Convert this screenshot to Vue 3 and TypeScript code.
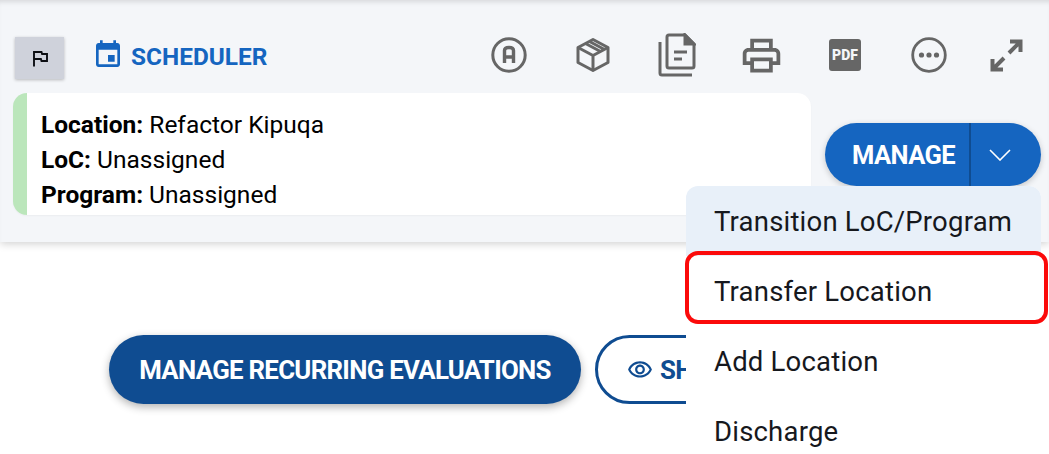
<template>
  <div class="page">
    <header class="panel">
      <div class="toolbar">
        <button class="flag-btn" aria-label="Flag">
          <svg width="16" height="17" viewBox="0 0 16 17" fill="none" stroke="#0c0e12" stroke-width="1.900">
            <path d="M2 16.500V2h7.500l.6 2H15v7H9.500l-.6-2H2" />
          </svg>
        </button>
        <div class="title">
          <svg class="title-icon" width="32" height="32" viewBox="0 0 24 24" fill="#1565c0">
            <path d="M17 12h-5v5h5v-5zM16 1v2H8V1H6v2H5c-1.110 0-1.990.9-1.990 2L3 19c0 1.100.89 2 2 2h14c1.100 0 2-.9 2-2V5c0-1.100-.9-2-2-2h-1V1h-2zm3 18H5V8h14v11z" />
          </svg>
          <span>SCHEDULER</span>
        </div>
        <div class="actions">
          <span class="action">
            <svg width="38" height="38" viewBox="0 0 38 38" fill="none" stroke="#666" stroke-width="3">
              <circle cx="19" cy="19" r="16.200" />
              <path d="M14.500 27V14.500q0-3 4.500-3t4.500 3V27M14.500 21h9" stroke-width="3.400" />
            </svg>
          </span>
          <span class="action">
            <svg width="36" height="36" viewBox="0 0 36 36" fill="none" stroke="#666" stroke-width="3" stroke-linejoin="round">
              <path d="M18 2.500 33 10.500v15L18 33.500 3 25.500v-15z" />
              <path d="M3 10.500 18 18.500l15-8M18 18.500v15M10.500 6.500l15 8M14.500 4.500l15 8" />
            </svg>
          </span>
          <span class="action">
            <svg width="38" height="44" viewBox="0 0 38 44" fill="none" stroke="#666" stroke-width="3">
              <path d="M2 9v31q0 2 2 2h30" />
              <path d="M11 2h16l9 9v22q0 2-2 2H11q-2 0-2-2V4q0-2 2-2z" />
              <path d="M27 2v9h9z" fill="#666" />
              <path d="M16 19h13M16 26h8" />
            </svg>
          </span>
          <span class="action">
            <svg width="45" height="45" viewBox="0 0 24 24" fill="#666">
              <path d="M19 8h-1V3H6v5H5c-1.660 0-3 1.340-3 3v6h4v4h12v-4h4v-6c0-1.660-1.340-3-3-3zM8 5h8v3H8V5zm8 12v2H8v-4h8v2zm2-2v-2H6v2H4v-4c0-.55.45-1 1-1h14c.55 0 1 .45 1 1v4h-2z" />
            </svg>
          </span>
          <span class="action">
            <span class="pdf">PDF</span>
          </span>
          <span class="action">
            <svg width="36" height="36" viewBox="0 0 36 36" fill="#666">
              <circle cx="18" cy="18" r="16.300" fill="none" stroke="#666" stroke-width="2.800" />
              <circle cx="10.500" cy="18" r="2.600" />
              <circle cx="18" cy="18" r="2.600" />
              <circle cx="25.500" cy="18" r="2.600" />
            </svg>
          </span>
          <span class="action">
            <svg width="33" height="33" viewBox="0 0 33 33" fill="none" stroke="#666" stroke-width="4">
              <path d="M20 2.500h10.500V13M30 3 19 14" />
              <path d="M2.500 20v10.500H13M3 30l11-11" />
            </svg>
          </span>
        </div>
      </div>
      <div class="info-row">
        <div class="card">
          <div v-for="row in infoRows" :key="row.label" class="card-line">
            <b>{{ row.label }}:</b> {{ row.value }}
          </div>
        </div>
        <div class="manage">
          <span class="manage-label">MANAGE</span>
          <span class="manage-caret">
            <svg width="22" height="12" viewBox="0 0 22 12" fill="none" stroke="#fff" stroke-width="1.600">
              <path d="M1 1l10 10L21 1" />
            </svg>
          </span>
        </div>
      </div>
    </header>

    <div class="buttons">
      <button class="btn-solid">MANAGE RECURRING EVALUATIONS</button>
      <button class="btn-outline">
        <svg width="26" height="26" viewBox="0 0 24 24" fill="#0f4c91">
          <path d="M12 6c3.790 0 7.170 2.130 8.820 5.500C19.170 14.870 15.790 17 12 17s-7.170-2.130-8.820-5.500C4.830 8.130 8.210 6 12 6m0-2C7 4 2.730 7.110 1 11.500 2.730 15.890 7 19 12 19s9.270-3.110 11-7.500C21.270 7.110 17 4 12 4zm0 5c1.380 0 2.500 1.120 2.500 2.500S13.380 14 12 14s-2.500-1.120-2.500-2.500S10.620 9 12 9m0-2c-2.480 0-4.500 2.020-4.500 4.500S9.520 16 12 16s4.500-2.020 4.500-4.500S14.480 7 12 7z" />
        </svg>
        <span class="outline-label">SH</span>
      </button>
    </div>

    <ul class="menu">
      <li
        v-for="item in menuItems"
        :key="item"
        :class="['menu-item', { 'is-active': item === activeItem }]"
      >
        {{ item }}
      </li>
    </ul>
    <div class="highlight"></div>
  </div>
</template>

<script setup lang="ts">
const infoRows: { label: string; value: string }[] = [
  { label: 'Location', value: 'Refactor Kipuqa' },
  { label: 'LoC', value: 'Unassigned' },
  { label: 'Program', value: 'Unassigned' },
]

const activeItem = 'Transition LoC/Program'
const menuItems: string[] = ['Transition LoC/Program', 'Transfer Location', 'Add Location', 'Discharge']
</script>

<style>
html, body {
  margin: 0;
  background: #fff;
  overflow: hidden;
}
</style>

<style scoped>
.page {
  position: relative;
  width: 1049px;
  height: 454px;
  overflow: hidden;
  font-family: Roboto, "Liberation Sans", sans-serif;
  color: #000;
  background: #fff;
}
.panel {
  box-sizing: border-box;
  height: 242px;
  padding-top: 37px;
  background: #f4f6f9;
  box-shadow: 0 2px 8px rgba(0, 0, 0, 0.18), inset 0 5px 5px -3px rgba(0, 0, 0, 0.12);
}
.toolbar {
  display: flex;
  align-items: flex-start;
  height: 56px;
  padding: 0 8px 0 15px;
}
.flag-btn {
  display: flex;
  align-items: center;
  justify-content: center;
  width: 49px;
  height: 42px;
  padding: 0;
  border: none;
  background: #cfd2db;
  box-shadow: 0 1px 3px rgba(0, 0, 0, 0.25);
}
.title {
  display: flex;
  align-items: center;
  gap: 7px;
  margin: 4px 0 0 28px;
  color: #1565c0;
  font-size: 24.400px;
  font-weight: 700;
}
.title-icon {
  margin-top: -2px;
}
.actions {
  display: flex;
  margin-left: auto;
  height: 36px;
}
.action {
  display: flex;
  align-items: center;
  justify-content: center;
  width: 84px;
  height: 36px;
}
.action:last-child {
  width: 70px;
}
.pdf {
  display: block;
  width: 32px;
  height: 32px;
  border-radius: 3px;
  background: #666;
  color: #f4f6f9;
  font-size: 14px;
  font-weight: 900;
  line-height: 32px;
  text-align: center;
}
.info-row {
  display: flex;
  align-items: flex-start;
  padding: 0 8px 0 13px;
}
.card {
  box-sizing: border-box;
  width: 798px;
  height: 122px;
  padding: 14px 0 0 14px;
  border-left: 14px solid #bbe6bb;
  border-radius: 14px;
  background: #fff;
  box-shadow: 0 1px 2px rgba(0, 0, 0, 0.04);
  font-size: 24.500px;
  line-height: 35px;
}
.card b {
  font-weight: 700;
}
.manage {
  display: flex;
  align-items: stretch;
  width: 216px;
  height: 63px;
  margin: 30px 0 0 14px;
  border-radius: 32px;
  background: #1565c0;
  color: #fff;
  box-shadow: 0 2px 6px rgba(0, 0, 0, 0.2);
}
.manage-label {
  display: flex;
  align-items: center;
  justify-content: center;
  box-sizing: border-box;
  width: 146px;
  padding-left: 13px;
  border-right: 2px solid #0f4c91;
  font-size: 25.500px;
  font-weight: 700;
  letter-spacing: -0.6px;
}
.manage-caret {
  display: flex;
  flex: 1;
  align-items: center;
  justify-content: center;
  padding-right: 13px;
}
.buttons {
  display: flex;
  gap: 14px;
  padding: 93px 0 0 109px;
}
.btn-solid {
  height: 69px;
  width: 472px;
  padding: 0;
  border: none;
  border-radius: 35px;
  background: #0f4c91;
  color: #fff;
  font-family: inherit;
  font-size: 25.800px;
  font-weight: 700;
  letter-spacing: -0.7px;
  box-shadow: 0 3px 8px rgba(0, 0, 0, 0.3);
}
.btn-outline {
  display: flex;
  flex-shrink: 0;
  align-items: center;
  gap: 7px;
  box-sizing: border-box;
  height: 69px;
  width: 300px;
  padding: 0 0 0 29px;
  border: 3.500px solid #0f4c91;
  border-radius: 35px;
  background: #fff;
  color: #0f4c91;
  font-family: inherit;
  font-size: 25.800px;
  font-weight: 700;
  letter-spacing: -0.7px;
}
.menu {
  position: absolute;
  top: 186px;
  left: 686px;
  width: 355px;
  margin: 0;
  padding: 0;
  list-style: none;
  border-radius: 12px 12px 0 0;
  background: #fff;
  overflow: hidden;
  font-size: 27.500px;
}
.menu-item {
  height: 70px;
  padding-left: 28px;
  line-height: 71px;
  letter-spacing: 0.2px;
  color: #16181d;
}
.menu-item.is-active {
  background: #e8f0f9;
}
.highlight {
  position: absolute;
  top: 251px;
  left: 685px;
  box-sizing: border-box;
  width: 363px;
  height: 73px;
  border: 4px solid #fb0a0a;
  border-radius: 13px;
}
</style>
